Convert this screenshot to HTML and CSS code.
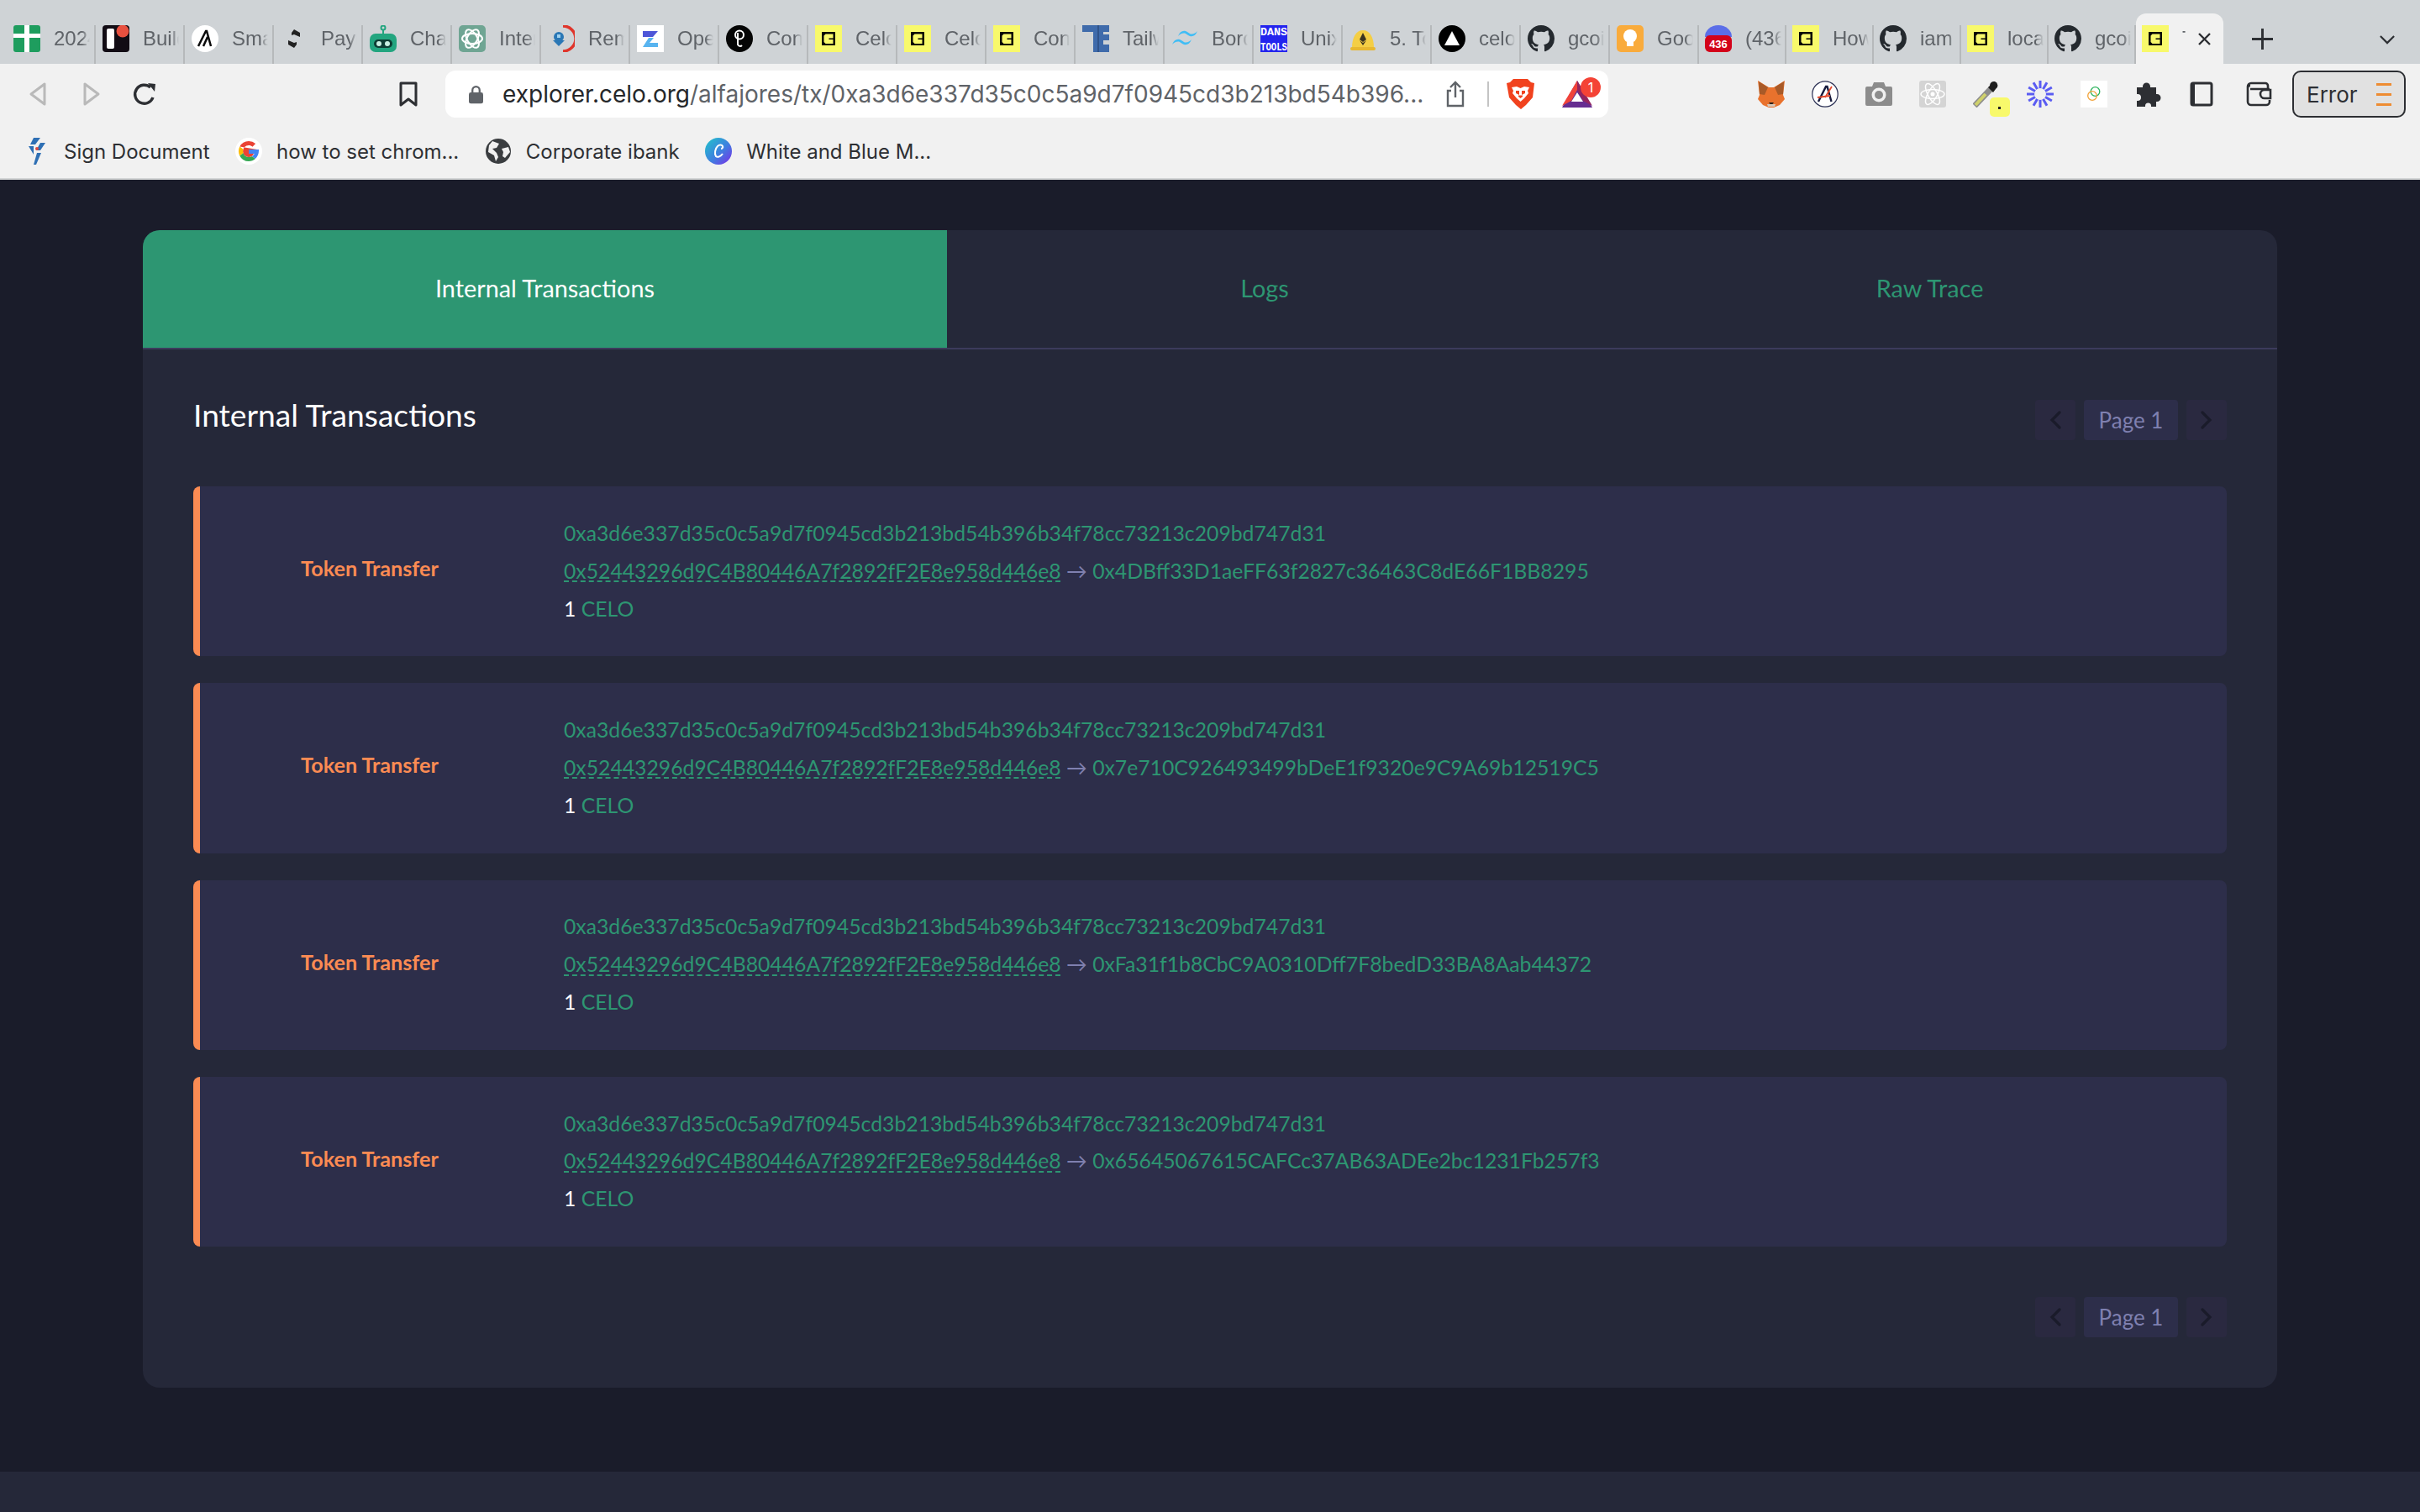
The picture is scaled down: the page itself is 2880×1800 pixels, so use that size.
FILE: index.html
```html
<!DOCTYPE html>
<html lang="en">
<head>
  <meta charset="UTF-8">
  <title>Celo Explorer - Internal Transactions</title>
  <link rel="stylesheet" href="styles.css">
</head>
<body>

  <svg class="icon-defs" width="0" height="0">
    <symbol id="fav-celo" viewBox="0 0 32 32">
      <rect width="32" height="32" fill="#f8f96b"/>
      <rect x="8" y="8" width="16" height="16" fill="#050505"/>
      <path d="M10.500 12.500l2-2h9v5h-5v1.500h5v5h-9l-2-2z" fill="#f8f96b"/>
    </symbol>
    <symbol id="fav-github" viewBox="0 0 16 16">
      <path fill="#24292e" d="M8 0C3.580 0 0 3.580 0 8c0 3.540 2.290 6.530 5.470 7.590.4.070.55-.17.55-.38 0-.19-.01-.82-.01-1.490-2.010.37-2.530-.49-2.690-.94-.09-.23-.48-.94-.82-1.130-.28-.15-.68-.52-.01-.53.63-.01 1.080.58 1.230.82.72 1.210 1.870.87 2.330.66.070-.52.28-.87.51-1.070-1.780-.2-3.640-.89-3.640-3.950 0-.87.31-1.590.82-2.150-.08-.2-.36-1.020.08-2.120 0 0 .67-.21 2.200.82.64-.18 1.320-.27 2-.27s1.360.09 2 .27c1.530-1.040 2.200-.82 2.200-.82.44 1.100.16 1.920.08 2.120.51.56.82 1.270.82 2.150 0 3.070-1.870 3.750-3.650 3.950.29.25.54.73.54 1.480 0 1.070-.01 1.930-.01 2.200 0 .21.15.46.55.38A8.013 8.013 0 0016 8c0-4.420-3.580-8-8-8z"/>
    </symbol>
  </svg>

  <div class="tab-strip">
    <div class="tab">
      <svg class="favicon" viewBox="0 0 32 32"><rect width="32" height="32" rx="3" fill="#1e9d5e"/><path d="M13 0h6v10h13v5H19v17h-6V15H0v-5h13z" fill="#fff"/></svg>
      <span class="tab-title">2024</span>
    </div>
    <div class="tab">
      <svg class="favicon" viewBox="0 0 32 32"><rect width="32" height="32" rx="4" fill="#120c14"/><rect x="5" y="4" width="9" height="24" rx="2" fill="#fff"/><circle cx="24" cy="7" r="7.500" fill="#e8503f"/></svg>
      <span class="tab-title">Build</span>
    </div>
    <div class="tab">
      <svg class="favicon" viewBox="0 0 32 32"><circle cx="16" cy="16" r="16" fill="#fff"/><path d="M8 25 17 7h1l5 18M14 25l5-11" fill="none" stroke="#0a0a0a" stroke-width="2.500"/></svg>
      <span class="tab-title">Smart</span>
    </div>
    <div class="tab">
      <svg class="favicon" viewBox="0 0 32 32"><path d="M16 5l7 4v5l-7-3-3 1v-3zM16 27l-7-4v-5l7 3 3-1v3z" fill="#222"/></svg>
      <span class="tab-title">Payment</span>
    </div>
    <div class="tab">
      <svg class="favicon" viewBox="0 0 32 32"><circle cx="16" cy="3" r="2.500" fill="none" stroke="#23a57f" stroke-width="2"/><rect x="15" y="5" width="2" height="6" fill="#23a57f"/><rect y="10" width="32" height="22" rx="7" fill="#23a57f"/><rect x="5" y="17" width="22" height="10" rx="5" fill="#0f3d34"/><circle cx="11" cy="22" r="3" fill="#c9efe2"/><circle cx="21" cy="22" r="3" fill="#c9efe2"/></svg>
      <span class="tab-title">ChatGPT</span>
    </div>
    <div class="tab">
      <svg class="favicon" viewBox="0 0 32 32"><rect width="32" height="32" rx="5" fill="#6fa593"/><g fill="none" stroke="#fff" stroke-width="2"><ellipse cx="16" cy="16" rx="12" ry="6"/><ellipse cx="16" cy="16" rx="12" ry="6" transform="rotate(60 16 16)"/><ellipse cx="16" cy="16" rx="12" ry="6" transform="rotate(120 16 16)"/></g></svg>
      <span class="tab-title">Internal</span>
    </div>
    <div class="tab">
      <svg class="favicon" viewBox="0 0 32 32"><path d="M18 1a15 15 0 0 1 0 30" fill="none" stroke="#e0352b" stroke-width="3.500"/><circle cx="13" cy="14" r="6" fill="#2a77b5"/><path d="M6 18h14l-7 7z" fill="#2a77b5"/><rect x="11" y="11" width="4" height="4" fill="#9ed0ee"/></svg>
      <span class="tab-title">Remix</span>
    </div>
    <div class="tab">
      <svg class="favicon" viewBox="0 0 32 32"><rect width="32" height="32" fill="#fff"/><path d="M7 7h18l-6 7H7z" fill="#4e56d8"/><path d="M14 15h6l-5 6h10v5H7z" fill="#58b4f0"/></svg>
      <span class="tab-title">OpenZeppelin</span>
    </div>
    <div class="tab">
      <svg class="favicon" viewBox="0 0 32 32"><circle cx="16" cy="16" r="16" fill="#050505"/><circle cx="16" cy="11.500" r="5" fill="none" stroke="#fff" stroke-width="2"/><path d="M14 9v14a3 3 0 0 0 5 1" fill="none" stroke="#fff" stroke-width="2"/></svg>
      <span class="tab-title">Contract</span>
    </div>
    <div class="tab">
      <svg class="favicon"><use href="#fav-celo"/></svg>
      <span class="tab-title">Celo</span>
    </div>
    <div class="tab">
      <svg class="favicon"><use href="#fav-celo"/></svg>
      <span class="tab-title">Celo</span>
    </div>
    <div class="tab">
      <svg class="favicon"><use href="#fav-celo"/></svg>
      <span class="tab-title">Contract</span>
    </div>
    <div class="tab">
      <svg class="favicon" viewBox="0 0 32 32"><path d="M0 0h32v8h-7v3h7v7h-7v5h7v9H13V8H0z" fill="#3f6bab"/><path d="M19 0v32" stroke="#2c4d80" stroke-width="1.500"/></svg>
      <span class="tab-title">Tailwind</span>
    </div>
    <div class="tab">
      <svg class="favicon" viewBox="0 0 32 32"><path d="M8 13c2-5 5-7 9-6 3 .8 4 3.500 7 3.500 3 0 5-1.500 7-3.500-2 5-5 7-9 6-3-.8-4-3.500-7-3.500-3 0-5 1.500-7 3.500zM1 23c2-5 5-7 9-6 3 .8 4 3.500 7 3.500 3 0 5-1.500 7-3.500-2 5-5 7-9 6-3-.8-4-3.500-7-3.500-3 0-5 1.500-7 3.500z" fill="#40bdf5"/></svg>
      <span class="tab-title">Border</span>
    </div>
    <div class="tab">
      <svg class="favicon" viewBox="0 0 32 32"><rect width="32" height="32" fill="#2324ee"/><text x="0" y="12" class="fav-text" textLength="32" lengthAdjust="spacingAndGlyphs">DANS</text><text x="0" y="30" class="fav-text" textLength="32" lengthAdjust="spacingAndGlyphs">TOOLS</text></svg>
      <span class="tab-title">Unix</span>
    </div>
    <div class="tab">
      <svg class="favicon" viewBox="0 0 32 32"><path d="M3 27C3 14 8 6 16 6s13 8 13 21z" fill="#f4ce45"/><rect x="1" y="26" width="30" height="4" rx="2" fill="#e8b830"/><path d="M16 9l4 8-4 3-4-3zM12 18l4 3 4-3-4 6z" fill="#3b3420"/></svg>
      <span class="tab-title">5. Token</span>
    </div>
    <div class="tab">
      <svg class="favicon" viewBox="0 0 32 32"><circle cx="16" cy="16" r="16" fill="#000"/><path d="M16 7l9 17H7z" fill="#fff"/></svg>
      <span class="tab-title">celo</span>
    </div>
    <div class="tab">
      <svg class="favicon"><use href="#fav-github"/></svg>
      <span class="tab-title">gcoin</span>
    </div>
    <div class="tab">
      <svg class="favicon" viewBox="0 0 32 32"><rect width="32" height="32" rx="5" fill="#f9ab3c"/><circle cx="16" cy="13" r="8" fill="#fff"/><rect x="12" y="20" width="8" height="5" fill="#fff"/></svg>
      <span class="tab-title">Google</span>
    </div>
    <div class="tab tab-narrow">
      <svg class="favicon" viewBox="0 0 32 32"><path d="M0 14a16 14 0 0 1 32 0z" fill="#5b6ee8"/><rect y="12" width="32" height="20" rx="6" fill="#d3021a"/><text x="16" y="27" class="fav-count">436</text></svg>
      <span class="tab-title">(436)</span>
    </div>
    <div class="tab tab-narrow">
      <svg class="favicon"><use href="#fav-celo"/></svg>
      <span class="tab-title">How</span>
    </div>
    <div class="tab tab-narrow">
      <svg class="favicon"><use href="#fav-github"/></svg>
      <span class="tab-title">iam</span>
    </div>
    <div class="tab tab-narrow">
      <svg class="favicon"><use href="#fav-celo"/></svg>
      <span class="tab-title">local</span>
    </div>
    <div class="tab tab-narrow">
      <svg class="favicon"><use href="#fav-github"/></svg>
      <span class="tab-title">gcoin</span>
    </div>
    <div class="tab tab-active">
      <svg class="favicon"><use href="#fav-celo"/></svg>
      <span class="tab-title tab-title-cut">T</span>
      <svg class="tab-close" viewBox="0 0 17 17"><path d="M2 2l13 13M15 2L2 15" stroke="#2d2f33" stroke-width="2.400" fill="none"/></svg>
    </div>
    <svg class="tab-new" viewBox="0 0 26 26"><path d="M13 0v26M0 13h26" stroke="#2d2f33" stroke-width="3" fill="none"/></svg>
    <svg class="tab-menu" viewBox="0 0 20 12"><path d="M1 1l9 9 9-9" stroke="#2d2f33" stroke-width="2.400" fill="none"/></svg>
  </div>

  <div class="toolbar">
    <div class="tool-row">
      <span class="tool-slot">
        <svg class="tool-icon" viewBox="0 0 32 32"><path d="M24 4v24L8 16z" fill="none" stroke="#b9b9b9" stroke-width="3" stroke-linejoin="round"/></svg>
      </span>
      <span class="tool-slot">
        <svg class="tool-icon" viewBox="0 0 32 32"><path d="M8 4v24l16-12z" fill="none" stroke="#b9b9b9" stroke-width="3" stroke-linejoin="round"/></svg>
      </span>
      <span class="tool-slot">
        <svg class="tool-icon" viewBox="0 0 32 32"><path d="M25 20a11 11 0 1 1-3-12" fill="none" stroke="#2d2f33" stroke-width="3.400"/><path d="M19 3l9 1-1 9z" fill="#2d2f33"/></svg>
      </span>
      <span class="tool-slot bookmark-slot">
        <svg class="tool-icon" viewBox="0 0 32 32"><path d="M7 3h18v26l-9-7-9 7z" fill="none" stroke="#2d2f33" stroke-width="3" stroke-linejoin="round"/></svg>
      </span>

      <div class="address-bar">
        <svg class="lock-icon" viewBox="0 0 18 24"><path d="M4.500 11V7a4.500 4.500 0 0 1 9 0v4" fill="none" stroke="#5f6368" stroke-width="2.400"/><rect y="10" width="18" height="14" rx="2.500" fill="#5f6368"/></svg>
        <span class="address-text"><b class="address-host">explorer.celo.org</b>/alfajores/tx/0xa3d6e337d35c0c5a9d7f0945cd3b213bd54b396...</span>
        <svg class="share-icon" viewBox="0 0 22 32"><path d="M11 20V2M5 8l6-6 6 6M6 12H2v18h18V12h-4" fill="none" stroke="#5f6368" stroke-width="2.400"/></svg>
        <span class="address-divider"></span>
        <svg class="brave-icon" viewBox="0 0 33 36"><path d="M8 0h17l4 4 4 1-2 17-8 9-6 5-6-5-8-9L0 5l4-1z" fill="#f1421e"/><path d="M6 10l6-1 4.500 2 4.500-2 6 1-2 4 1 3-5 6-4.500 4-4.500-4-5-6 1-3z" fill="#fff"/><path d="M11 14h4v5l-4-2zM22 14h-4v5l4-2zM14 21l2.500 2 2.500-2v-1.500h-5z" fill="#f1421e"/></svg>
        <span class="bat-icon">
          <svg class="bat-mark" viewBox="0 0 36 32"><path d="M18 0L0 32h36z" fill="#662d91"/><path d="M18 0L0 30l11-6 7-13z" fill="#f0433a"/><path d="M18 0l18 30-11-6-7-13z" fill="#93255f"/><path d="M18 14l-7 11h14z" fill="#fff"/></svg>
          <span class="bat-badge">1</span>
        </span>
      </div>

      <div class="extensions">
        <span class="tool-slot">
          <svg class="tool-icon" viewBox="0 0 32 32"><path d="M0 0l13 8h6l13-8-2 17 2 5-6 7-7 3h-6l-7-3-6-7 2-5z" fill="#e9722d"/><path d="M1 1l11 7-4 9-6-1zM31 1L20 8l4 9 6-1z" fill="#a85a28"/><path d="M13 26h6l-3 4z" fill="#2b2118"/><path d="M11 28h10l-1 3h-8z" fill="#d8c8b8"/></svg>
        </span>
        <span class="tool-slot">
          <svg class="tool-icon" viewBox="0 0 32 32"><circle cx="16" cy="16" r="15.200" fill="#fff" stroke="#2c3155" stroke-width="1.200"/><path d="M8 25l9-18h1.500l5 18" fill="none" stroke="#171b3d" stroke-width="2.400"/><path d="M7 20l15-2M24 7l-8 13" fill="none" stroke="#e5482c" stroke-width="1.800"/></svg>
        </span>
        <span class="tool-slot">
          <svg class="tool-icon" viewBox="0 0 32 32"><path d="M10 2h12l2 5h6a2 2 0 0 1 2 2v19a2 2 0 0 1-2 2H2a2 2 0 0 1-2-2V9a2 2 0 0 1 2-2h6z" fill="#8c8c8c"/><circle cx="16" cy="17" r="8.500" fill="#f1f1f1"/><circle cx="16" cy="17" r="5" fill="#8c8c8c"/></svg>
        </span>
        <span class="tool-slot">
          <svg class="tool-icon" viewBox="0 0 32 32"><rect width="32" height="32" rx="3" fill="#d4d4d4"/><g fill="none" stroke="#fff" stroke-width="1.500"><ellipse cx="16" cy="16" rx="14" ry="5.500"/><ellipse cx="16" cy="16" rx="14" ry="5.500" transform="rotate(60 16 16)"/><ellipse cx="16" cy="16" rx="14" ry="5.500" transform="rotate(120 16 16)"/></g><circle cx="16" cy="16" r="2.500" fill="#fff"/></svg>
        </span>
        <span class="tool-slot dropper-slot">
          <svg class="tool-icon" viewBox="0 0 32 32"><path d="M2 30l19-20" stroke="#8d8d8d" stroke-width="7"/><path d="M3 29l12-13" stroke="#cfd16c" stroke-width="4"/><path d="M18 8l6 6 3-4a5 5 0 0 0-1-9 5 5 0 0 0-6 5z" fill="#1f1f1f"/></svg>
          <span class="dropper-badge"><i class="dropper-dot"></i></span>
        </span>
        <span class="tool-slot">
          <svg class="tool-icon" viewBox="0 0 32 32"><g stroke="#5a5cf2" stroke-width="3"><path d="M16 0v32"/><path d="M16 0v32" transform="rotate(30 16 16)"/><path d="M16 0v32" transform="rotate(60 16 16)"/><path d="M16 0v32" transform="rotate(90 16 16)"/><path d="M16 0v32" transform="rotate(120 16 16)"/><path d="M16 0v32" transform="rotate(150 16 16)"/></g><circle cx="16" cy="16" r="7" fill="#f1f1f1"/></svg>
        </span>
        <span class="tool-slot">
          <svg class="tool-icon" viewBox="0 0 32 32"><rect width="32" height="32" fill="#fff"/><circle cx="17.500" cy="13" r="5.300" fill="none" stroke="#2cb35c" stroke-width="1.300"/><circle cx="14" cy="18" r="5.300" fill="none" stroke="#f2a33a" stroke-width="1.300"/></svg>
        </span>
        <span class="tool-slot">
          <svg class="tool-icon" viewBox="0 0 32 32"><path d="M3 8h7V7a4.500 4.500 0 0 1 9 0v1h7v8h1a4.500 4.500 0 0 1 0 9h-1v6h-6v-1a3.500 3.500 0 0 0-7 0v1H3v-7h1a4 4 0 0 0 0-8H3z" fill="#2d2f33"/></svg>
        </span>
        <span class="tool-slot">
          <svg class="tool-icon" viewBox="0 0 32 32"><rect x="4" y="3" width="24" height="26" rx="2" fill="none" stroke="#2d2f33" stroke-width="3"/><rect x="4" y="3" width="4" height="26" fill="#2d2f33"/></svg>
        </span>
        <span class="tool-slot wallet-slot">
          <svg class="tool-icon" viewBox="0 0 32 32"><path d="M27 10V6a3 3 0 0 0-3-3H7a4 4 0 0 0-4 4v18a4 4 0 0 0 4 4h18a4 4 0 0 0 4-4v-2M3 8a3 3 0 0 1 3-2M29 10H6" fill="none" stroke="#2d2f33" stroke-width="2.600"/><path d="M30 11h-7a5 5 0 0 0 0 10h7z" fill="none" stroke="#2d2f33" stroke-width="2.600"/></svg>
        </span>
      </div>

      <div class="error-button">
        <span class="error-label">Error</span>
        <span class="error-dashes"><i></i><i></i><i></i></span>
      </div>
    </div>

    <div class="bookmark-bar">
      <div class="bookmark">
        <svg class="bookmark-icon bookmark-sign" viewBox="0 0 24 32"><path d="M8 0h8l-6 8H4zM16 6h6l-6 9h-5zM2 10h6L8 20zM12 18h5l-6 14H8z" fill="#2e6fb4"/><circle cx="12" cy="13" r="2" fill="#df4b3f"/></svg>
        <span>Sign Document</span>
      </div>
      <div class="bookmark">
        <svg class="bookmark-icon" viewBox="0 0 32 32"><circle cx="16" cy="16" r="16" fill="#fff"/><path d="M26 14H16v5h6a6.500 6.500 0 0 1-6 4 7 7 0 0 1 0-14c1.800 0 3.300.6 4.500 1.700l3.600-3.600A12 12 0 0 0 16 4a12 12 0 0 0-10.700 6.600" fill="#ea4335"/><path d="M5.300 10.600a12 12 0 0 0 0 10.800l4.200-3.200a7 7 0 0 1 0-4.400z" fill="#fbbc05"/><path d="M5.300 21.400A12 12 0 0 0 16 28c3 0 5.800-1 7.900-3l-4-3.100c-1 .7-2.400 1.100-3.900 1.100a7 7 0 0 1-6.500-4.800z" fill="#34a853"/><path d="M28 14H16v5h6.800c-.6 1.200-1.600 2.200-2.900 2.900l4 3.100c2.500-2.300 4.100-5.700 4.100-9.500z" fill="#4285f4"/></svg>
        <span>how to set chrom...</span>
      </div>
      <div class="bookmark">
        <svg class="bookmark-icon" viewBox="0 0 32 32"><circle cx="16" cy="16" r="15" fill="#3a3d40"/><path d="M9 4l8 3-3 5-5 1 5 5 2 5-3 5-2-7-7-4 1-8zM20 13l8-2 2 6-6 7-3-2 1-5z" fill="#f1f1f1"/></svg>
        <span>Corporate ibank</span>
      </div>
      <div class="bookmark">
        <svg class="bookmark-icon" viewBox="0 0 32 32"><defs><linearGradient id="canva-fill" x1="0" y1="0" x2="1" y2="1"><stop offset="0" stop-color="#1fc6c9"/><stop offset="0.550" stop-color="#3f7fe0"/><stop offset="1" stop-color="#7d2ae8"/></linearGradient></defs><circle cx="16" cy="16" r="16" fill="url(#canva-fill)"/><path d="M21 10c-1-2-4-2-6 0-3 3-4 9-2 12 2 2 6 0 8-3M21 10c1 2-1 3-2 3" fill="none" stroke="#fff" stroke-width="2"/></svg>
        <span>White and Blue M...</span>
      </div>
    </div>
  </div>

  <main class="page">
    <div class="card">
      <div class="card-tabs">
        <div class="card-tab card-tab-active">Internal Transactions</div>
        <div class="card-tab card-tab-logs">Logs</div>
        <div class="card-tab card-tab-trace">Raw Trace</div>
      </div>

      <div class="card-body">
        <div class="card-head">
          <h2 class="card-title">Internal Transactions</h2>
          <div class="pager">
            <span class="pager-btn"><svg class="pager-arrow" viewBox="0 0 14 22"><path d="M12 2L3 11l9 9" fill="none" stroke="#1a1b2a" stroke-width="3.200" stroke-linecap="round"/></svg></span>
            <span class="pager-page">Page 1</span>
            <span class="pager-btn"><svg class="pager-arrow" viewBox="0 0 14 22"><path d="M2 2l9 9-9 9" fill="none" stroke="#1a1b2a" stroke-width="3.200" stroke-linecap="round"/></svg></span>
          </div>
        </div>

        <div class="transfer-list">
          <div class="transfer-row">
            <div class="transfer-type">Token Transfer</div>
            <div class="transfer-info">
              <div class="transfer-line">0xa3d6e337d35c0c5a9d7f0945cd3b213bd54b396b34f78cc73213c209bd747d31</div>
              <div class="transfer-line"><span class="addr-from">0x52443296d9C4B80446A7f2892fF2E8e958d446e8</span> <span class="addr-arrow">→</span> 0x4DBff33D1aeFF63f2827c36463C8dE66F1BB8295</div>
              <div class="transfer-line"><span class="amount">1</span> CELO</div>
            </div>
          </div>

          <div class="transfer-row">
            <div class="transfer-type">Token Transfer</div>
            <div class="transfer-info">
              <div class="transfer-line">0xa3d6e337d35c0c5a9d7f0945cd3b213bd54b396b34f78cc73213c209bd747d31</div>
              <div class="transfer-line"><span class="addr-from">0x52443296d9C4B80446A7f2892fF2E8e958d446e8</span> <span class="addr-arrow">→</span> 0x7e710C926493499bDeE1f9320e9C9A69b12519C5</div>
              <div class="transfer-line"><span class="amount">1</span> CELO</div>
            </div>
          </div>

          <div class="transfer-row">
            <div class="transfer-type">Token Transfer</div>
            <div class="transfer-info">
              <div class="transfer-line">0xa3d6e337d35c0c5a9d7f0945cd3b213bd54b396b34f78cc73213c209bd747d31</div>
              <div class="transfer-line"><span class="addr-from">0x52443296d9C4B80446A7f2892fF2E8e958d446e8</span> <span class="addr-arrow">→</span> 0xFa31f1b8CbC9A0310Dff7F8bedD33BA8Aab44372</div>
              <div class="transfer-line"><span class="amount">1</span> CELO</div>
            </div>
          </div>

          <div class="transfer-row">
            <div class="transfer-type">Token Transfer</div>
            <div class="transfer-info">
              <div class="transfer-line">0xa3d6e337d35c0c5a9d7f0945cd3b213bd54b396b34f78cc73213c209bd747d31</div>
              <div class="transfer-line"><span class="addr-from">0x52443296d9C4B80446A7f2892fF2E8e958d446e8</span> <span class="addr-arrow">→</span> 0x65645067615CAFCc37AB63ADEe2bc1231Fb257f3</div>
              <div class="transfer-line"><span class="amount">1</span> CELO</div>
            </div>
          </div>
        </div>

        <div class="card-foot">
          <div class="pager">
            <span class="pager-btn"><svg class="pager-arrow" viewBox="0 0 14 22"><path d="M12 2L3 11l9 9" fill="none" stroke="#1a1b2a" stroke-width="3.200" stroke-linecap="round"/></svg></span>
            <span class="pager-page">Page 1</span>
            <span class="pager-btn"><svg class="pager-arrow" viewBox="0 0 14 22"><path d="M2 2l9 9-9 9" fill="none" stroke="#1a1b2a" stroke-width="3.200" stroke-linecap="round"/></svg></span>
          </div>
        </div>
      </div>
    </div>
  </main>

  <footer class="page-foot"></footer>

</body>
</html>
```

FILE: styles.css
```css
* {
  box-sizing: border-box;
}

html, body {
  height: 1800px;
  overflow: hidden;
}

body {
  margin: 0;
  background: #1a1c2a;
  font-family: 'Lato', 'Liberation Sans', sans-serif;
}

.icon-defs {
  display: block;
  height: 0;
}

/* browser tabs */
.tab-strip {
  display: flex;
  align-items: flex-end;
  height: 76px;
  padding-left: 8px;
  background: #cfd3d6;
}

.tab {
  display: flex;
  align-items: flex-start;
  flex: none;
  width: 106px;
  height: 46px;
  padding-left: 8px;
  border-right: 2px solid #b6b9bb;
  overflow: hidden;
}

.tab-narrow {
  width: 104px;
  padding-left: 7px;
}

.tab-active {
  position: relative;
  width: 104px;
  height: 60px;
  padding-top: 14px;
  padding-left: 7px;
  border-right: none;
  border-radius: 12px 12px 0 0;
  background: #f1f1f1;
}

.favicon {
  flex: none;
  width: 32px;
  height: 32px;
}

.fav-text {
  font-family: 'Liberation Mono', monospace;
  font-size: 13px;
  font-weight: bold;
  fill: #fff;
}

.fav-count {
  font-family: 'Liberation Sans', sans-serif;
  font-size: 13px;
  font-weight: bold;
  text-anchor: middle;
  fill: #fff;
}

.tab-title {
  flex: none;
  width: 43px;
  margin-left: 16px;
  overflow: hidden;
  white-space: nowrap;
  font-family: 'Liberation Sans', sans-serif;
  font-size: 24px;
  line-height: 32px;
  color: #5f6368;
  -webkit-mask-image: linear-gradient(to right, #000 78%, transparent);
  mask-image: linear-gradient(to right, #000 78%, transparent);
}

.tab-title-cut {
  width: 4px;
  height: 14px;
  margin-left: 16px;
}

.tab-close {
  position: absolute;
  left: 73px;
  top: 22px;
  width: 17px;
  height: 17px;
}

.tab-new {
  flex: none;
  width: 25px;
  height: 25px;
  margin-left: 34px;
  margin-bottom: 17px;
}

.tab-menu {
  flex: none;
  width: 18px;
  height: 11px;
  margin-left: 127px;
  margin-bottom: 23px;
}

/* address bar and extension icons */
.toolbar {
  height: 138px;
  border-bottom: 2px solid #d3d5d6;
  background: #f1f1f1;
}

.tool-row {
  display: flex;
  align-items: center;
  height: 56px;
  margin-top: 0;
  padding-left: 13px;
  position: relative;
  top: 8px;
}

.tool-slot {
  position: relative;
  display: flex;
  align-items: center;
  justify-content: center;
  flex: none;
  width: 64px;
  height: 56px;
}

.tool-icon {
  width: 32px;
  height: 32px;
}

.bookmark-slot {
  margin-left: 249px;
}

.address-bar {
  display: flex;
  align-items: center;
  flex: none;
  width: 1384px;
  height: 56px;
  margin-left: 12px;
  padding-left: 28px;
  border-radius: 12px;
  background: #fff;
}

.lock-icon {
  flex: none;
  width: 17px;
  height: 24px;
}

.address-text {
  flex: none;
  width: 1115px;
  margin-left: 23px;
  white-space: nowrap;
  font-family: 'Inter', 'Liberation Sans', sans-serif;
  font-size: 28px;
  color: #5f6368;
}

.address-host {
  font-weight: normal;
  color: #25272a;
}

.share-icon {
  flex: none;
  width: 22px;
  height: 32px;
  margin-left: 8px;
}

.address-divider {
  flex: none;
  width: 2px;
  height: 30px;
  margin-left: 27px;
  background: #c4c4c4;
}

.brave-icon {
  flex: none;
  width: 33px;
  height: 36px;
  margin-left: 21px;
}

.bat-icon {
  position: relative;
  flex: none;
  width: 36px;
  height: 32px;
  margin-left: 33px;
}

.bat-mark {
  display: block;
  width: 36px;
  height: 32px;
}

.bat-badge {
  position: absolute;
  left: 22px;
  top: -4px;
  width: 24px;
  height: 24px;
  border-radius: 50%;
  background: #f44336;
  font-family: 'Inter', sans-serif;
  font-size: 16px;
  line-height: 24px;
  text-align: center;
  color: #fff;
}

.extensions {
  display: flex;
  flex: none;
  margin-left: 162px;
}

.wallet-slot {
  margin-left: 4px;
}

.dropper-badge {
  position: absolute;
  left: 36px;
  top: 32px;
  width: 24px;
  height: 23px;
  border-radius: 5px;
  background: #f8f96b;
}

.dropper-dot {
  display: block;
  width: 3px;
  height: 3px;
  margin: 11px 0 0 10px;
  background: #222;
}

.error-button {
  display: flex;
  align-items: center;
  flex: none;
  width: 135px;
  height: 56px;
  margin-left: 8px;
  padding-left: 15px;
  border: 2px solid #2d2f33;
  border-radius: 10px;
  background: #e1e1e1;
}

.error-label {
  font-family: 'Inter', 'Liberation Sans', sans-serif;
  font-size: 26px;
  color: #2d2f33;
}

.error-dashes {
  display: flex;
  flex-direction: column;
  gap: 9px;
  margin-left: 22px;
}

.error-dashes i {
  display: block;
  width: 18px;
  height: 3px;
  background: #ee8c32;
}

/* bookmarks */
.bookmark-bar {
  display: flex;
  align-items: center;
  gap: 30.5px;
  height: 48px;
  margin-top: 24px;
  padding-left: 32px;
}

.bookmark {
  display: flex;
  align-items: center;
  gap: 17px;
  font-family: 'Inter', 'Liberation Sans', sans-serif;
  font-size: 24px;
  color: #2d2f33;
  white-space: nowrap;
}

.bookmark-icon {
  flex: none;
  width: 32px;
  height: 32px;
}

.bookmark-sign {
  width: 24px;
  margin-right: 3px;
}

/* page */
.page {
  height: 1538px;
  padding: 60px 170px 0;
  background: #1a1c2a;
}

.card {
  height: 1378px;
  border-radius: 20px;
  background: #252839;
  overflow: hidden;
}

.card-tabs {
  display: flex;
  height: 142px;
  border-bottom: 2px solid #3c3b5c;
}

.card-tab {
  display: flex;
  align-items: center;
  justify-content: center;
  padding-bottom: 2px;
  font-size: 28.8px;
  color: #2d9672;
}

.card-tab-active {
  width: 957px;
  background: #2d9672;
  color: #fff;
}

.card-tab-logs {
  width: 756px;
}

.card-tab-trace {
  width: 827px;
}

.card-body {
  padding: 60px 60px 0;
}

.card-head {
  display: flex;
  justify-content: space-between;
  align-items: center;
  height: 48px;
  margin-bottom: 55px;
}

.card-title {
  margin: 0 0 14px;
  font-size: 37.2px;
  font-weight: 400;
  color: #fff;
}

.pager {
  display: flex;
  gap: 10px;
}

.pager-btn {
  display: flex;
  align-items: center;
  justify-content: center;
  width: 48px;
  height: 48px;
  border-radius: 4px;
  background: #2a2940;
}

.pager-arrow {
  width: 14px;
  height: 22px;
}

.pager-page {
  display: flex;
  align-items: center;
  justify-content: center;
  width: 112px;
  height: 48px;
  border-radius: 4px;
  background: #2d2e4a;
  font-size: 26px;
  color: #7f80b0;
}

.transfer-list {
  display: flex;
  flex-direction: column;
  gap: 32px;
}

.transfer-row {
  display: flex;
  align-items: center;
  height: 202.25px;
  border-left: 8px solid #fb8b53;
  border-radius: 8px;
  background: #2d2e4a;
}

.transfer-type {
  flex: none;
  width: 404px;
  padding-bottom: 8px;
  text-align: center;
  font-size: 25.2px;
  font-weight: 700;
  color: #fb8b53;
}

.transfer-info {
  margin-left: 29px;
}

.transfer-line {
  height: 44.8px;
  font-size: 24.75px;
  line-height: 44.8px;
  color: #2d9672;
  white-space: nowrap;
}

.addr-from {
  text-decoration: underline dashed #2d9672 2px;
  text-underline-offset: 3px;
  text-decoration-skip-ink: none;
}

.addr-arrow {
  color: #7f80b0;
}

.amount {
  color: #fff;
}

.card-foot {
  display: flex;
  justify-content: flex-end;
  margin-top: 60px;
}

.page-foot {
  height: 48px;
  background: #252839;
}
```
